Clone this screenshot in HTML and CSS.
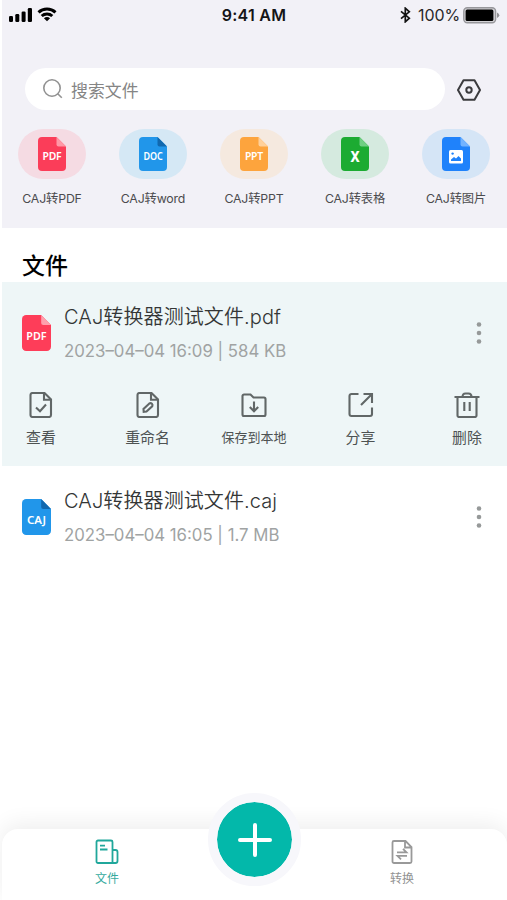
FILE: index.html
```html
<!DOCTYPE html>
<html lang="zh-CN">
<head>
<meta charset="utf-8">
<title>文件</title>
<link rel="stylesheet" href="styles.css">
</head>
<body>
<svg class="defs" width="0" height="0">
  <symbol id="doc" viewBox="0 0 28 34"><path d="M4 0H18.500L28 9.500V30a4 4 0 0 1-4 4H4a4 4 0 0 1-4-4V4a4 4 0 0 1 4-4Z" fill="currentColor"/></symbol>
</svg>
<div class="screen">
  <header class="top">
    <div class="status">
      <div class="signal">
        <svg width="23" height="16" viewBox="0 0 23 16"><rect x="0" y="9" width="4" height="6" rx="1.300"/><rect x="6.300" y="7" width="4" height="8" rx="1.300"/><rect x="12.600" y="4.500" width="4" height="10.500" rx="1.300"/><rect x="18.800" y="1" width="4.200" height="14" rx="1.300"/></svg>
        <svg width="20" height="15" viewBox="0 0 20 15"><path d="M1.500 5.400a12.500 12.500 0 0 1 17 0M4.700 9a7.800 7.800 0 0 1 10.600 0" fill="none" stroke="#000" stroke-width="3"/><path d="M10 14.300 6.900 11.300a4.600 4.600 0 0 1 6.200 0Z"/></svg>
      </div>
      <div class="clock">9:41 AM</div>
      <div class="power">
        <svg width="11" height="16" viewBox="0 0 11 16"><path d="M1 4.400 9.300 11.200 5.300 14.800V1.200l4 3.600L1 11.600" fill="none" stroke="#111" stroke-width="1.700"/></svg>
        <span>100%</span>
        <svg class="battery" width="37" height="17" viewBox="0 0 37 17"><rect x=".8" y=".8" width="31.800" height="15" rx="3.500" fill="#d2d1d5" stroke="#97979b" stroke-width="1.400"/><rect x="2.600" y="2.600" width="27.800" height="11.400" rx="1.500"/><path d="M34 5.500q2.300 1 2.300 2.800T34 11Z" fill="#919195"/></svg>
      </div>
    </div>
    <div class="searchrow">
      <div class="search">
        <svg width="20" height="20" viewBox="0 0 20 20" fill="none" stroke="#929292" stroke-width="1.600"><circle cx="9" cy="9" r="8.200"/><path d="m14.700 14.700 4.100 4"/></svg>
        <span>搜索文件</span>
      </div>
      <svg class="gear" width="24" height="22" viewBox="0 0 24 22" fill="none" stroke="#3b3b3e" stroke-width="2" stroke-linejoin="round"><path d="M6.500 1.300h11L23 11l-5.500 9.700h-11L1 11Z"/><circle cx="12" cy="11" r="2.700"/></svg>
    </div>
    <nav class="tools">
      <div class="tool"><div class="pill pink"><svg width="28" height="34" viewBox="0 0 28 34"><use href="#doc"/><path d="M18.500 0 28 9.500h-7.500a2 2 0 0 1-2-2Z" fill="#ff98a6"/><text x="14" y="23.300">PDF</text></svg></div><span>CAJ转PDF</span></div>
      <div class="tool"><div class="pill sky"><svg width="28" height="34" viewBox="0 0 28 34"><use href="#doc"/><path d="M18.500 0 28 9.500h-7.500a2 2 0 0 1-2-2Z" fill="#1168ae"/><text x="14" y="23.300" textLength="19" lengthAdjust="spacingAndGlyphs">DOC</text></svg></div><span>CAJ转word</span></div>
      <div class="tool"><div class="pill orange"><svg width="28" height="34" viewBox="0 0 28 34"><use href="#doc"/><path d="M18.500 0 28 9.500h-7.500a2 2 0 0 1-2-2Z" fill="#ffd09a"/><text x="14" y="23.300">PPT</text></svg></div><span>CAJ转PPT</span></div>
      <div class="tool"><div class="pill green"><svg width="28" height="34" viewBox="0 0 28 34"><use href="#doc"/><path d="M18.500 0 28 9.500h-7.500a2 2 0 0 1-2-2Z" fill="#70cf83"/><text class="big" x="14" y="24.800" textLength="9" lengthAdjust="spacingAndGlyphs">X</text></svg></div><span>CAJ转表格</span></div>
      <div class="tool"><div class="pill blue"><svg width="28" height="34" viewBox="0 0 28 34"><use href="#doc"/><path d="M18.500 0 28 9.500h-7.500a2 2 0 0 1-2-2Z" fill="#71b2ff"/><rect x="7" y="13" width="14" height="13.500" rx="1.500" fill="#fff"/><circle cx="10.600" cy="16.600" r="1.200" fill="currentColor"/><path d="M9 24v-1.500l3-2.500 2 1.500 2.500-2.500L19 21.500V24Z" fill="currentColor"/></svg></div><span>CAJ转图片</span></div>
    </nav>
  </header>
  <main>
    <h1>文件</h1>
    <section class="file active">
      <div class="row">
        <svg class="red" width="29" height="36" viewBox="0 0 28 34" preserveAspectRatio="none"><use href="#doc"/><path d="M18.500 0 28 9.500h-7.500a2 2 0 0 1-2-2Z" fill="#ffa0ad"/><text x="14" y="23.300">PDF</text></svg>
        <div class="info"><div class="name">CAJ转换器测试文件.pdf</div><div class="meta">2023–04–04 16:09 | 584 KB</div></div>
        <svg class="more" width="6" height="22" viewBox="0 0 6 22"><circle cx="3" cy="2.500" r="2.300"/><circle cx="3" cy="11" r="2.300"/><circle cx="3" cy="19.500" r="2.300"/></svg>
      </div>
      <div class="actions">
        <div class="action"><svg viewBox="0 0 26 26"><path d="M4.500 1h12L23 7.500V23a2 2 0 0 1-2 2H4.500a2 2 0 0 1-2-2V3a2 2 0 0 1 2-2Z"/><path d="M16 1.500v6.300h6.500"/><path d="m8 15.500 4 3.700 6-6.700"/></svg><span>查看</span></div>
        <div class="action"><svg viewBox="0 0 26 26"><path d="M4.500 1h12L23 7.500V23a2 2 0 0 1-2 2H4.500a2 2 0 0 1-2-2V3a2 2 0 0 1 2-2Z"/><path d="M16 1.500v6.300h6.500"/><path d="M8.700 19.800 8.500 17l5.800-5.500q1.500-.8 2.600.3t.3 2.600l-5.700 5.200Z"/></svg><span>重命名</span></div>
        <div class="action small"><svg viewBox="0 0 26 26"><path d="M3 2.500h6.500l3 3H23a1.500 1.500 0 0 1 1.500 1.500v15.500A1.500 1.500 0 0 1 23 24H3a1.500 1.500 0 0 1-1.500-1.500V4A1.500 1.500 0 0 1 3 2.500Z"/><path d="M13 9.500V19M8.800 15l4.200 4.200 4.200-4.200"/></svg><span>保存到本地</span></div>
        <div class="action"><svg viewBox="0 0 26 26"><path d="M10.500 2H3.500a2 2 0 0 0-2 2v18a2 2 0 0 0 2 2H22a2 2 0 0 0 2-2v-6.500M15.500 2H24v9M24 2 13 13"/></svg><span>分享</span></div>
        <div class="action"><svg viewBox="0 0 26 26"><path d="M.5 5h25M8.500 5q0-3.500 3-3.500h3q3 0 3 3.500M3.500 5v18.500A1.500 1.500 0 0 0 5 25h16a1.500 1.500 0 0 0 1.500-1.500V5M10.300 10v9M15.700 10v9"/></svg><span>删除</span></div>
      </div>
    </section>
    <section class="file">
      <div class="row">
        <svg class="azure" width="29" height="36" viewBox="0 0 28 34" preserveAspectRatio="none"><use href="#doc"/><path d="M18.500 0 28 9.500h-7.500a2 2 0 0 1-2-2Z" fill="#1168ae"/><text x="14" y="23.300" textLength="18.500" lengthAdjust="spacingAndGlyphs">CAJ</text></svg>
        <div class="info"><div class="name">CAJ转换器测试文件.caj</div><div class="meta">2023–04–04 16:05 | 1.7 MB</div></div>
        <svg class="more" width="6" height="22" viewBox="0 0 6 22"><circle cx="3" cy="2.500" r="2.300"/><circle cx="3" cy="11" r="2.300"/><circle cx="3" cy="19.500" r="2.300"/></svg>
      </div>
    </section>
  </main>
  <footer class="tabs">
    <div class="tab on"><svg width="24" height="26" viewBox="0 0 24 26"><path d="M3 1.500h13A1.500 1.500 0 0 1 17.500 3v21H3a1.500 1.500 0 0 1-1.500-1.500V3A1.500 1.500 0 0 1 3 1.500ZM17.500 11h3a2 2 0 0 1 2 2v9a2 2 0 0 1-2 2h-3M5 6.700h5M5 10.500h7.500"/></svg><span>文件</span></div>
    <div class="tab"><svg width="24" height="26" viewBox="0 0 24 26"><path d="M4 2h11.500l6 6v14.500A1.500 1.500 0 0 1 20 24H4a1.500 1.500 0 0 1-1.500-1.500v-19A1.500 1.500 0 0 1 4 2ZM15 2.500v6h6M7 13.300h9.500L13 9.800M17 16.800H7.500l3.500 3.500"/></svg><span>转换</span></div>
    <div class="add"><svg width="34" height="34" viewBox="0 0 34 34"><path d="M17 2v30M2 17h30" stroke="#fff" stroke-width="4" stroke-linecap="round"/></svg></div>
  </footer>
</div>
</body>
</html>
```

FILE: styles.css
```css
* { box-sizing: border-box; }
body { margin: 0; background: #fff; font-family: Inter, "Noto Sans CJK SC", sans-serif; }
svg { display: block; flex: none; }
.defs { position: absolute; }
.screen { width: 507px; height: 900px; padding-left: 2px; display: flex; flex-direction: column; overflow: hidden; }
.top { height: 228px; background: #f2f1f7; flex: none; }
.status { height: 68px; padding: 7px 7px 0 7px; display: grid; grid-template-columns: 1fr auto 1fr; align-items: start; }
.signal { display: flex; gap: 5px; }
.clock { font-size: 16px; line-height: 17px; font-weight: 600; color: #151517; letter-spacing: .25px; margin-right: 1px; }
.power { display: flex; justify-content: flex-end; font-size: 16px; line-height: 17px; color: #28282a; }
.power span { margin: 0 3px 0 7px; letter-spacing: -.1px; }
.searchrow { display: flex; align-items: center; gap: 12px; padding-left: 23px; }
.gear { margin-top: 2px; }
.search { width: 420px; height: 42px; border-radius: 21px; background: #fff; display: flex; align-items: center; gap: 8px; padding: 0 18px; font-size: 16.9px; color: #858585; }
.tools { display: grid; grid-template-columns: repeat(5, 1fr); margin: 19px .5px 0 -.5px; }
.tool { display: flex; flex-direction: column; align-items: center; font-size: 12.3px; line-height: 18px; letter-spacing: -.15px; color: #4b4b4e; gap: 11px; white-space: nowrap; }
.pill { width: 68px; height: 50px; border-radius: 25px; display: flex; align-items: center; justify-content: center; }
svg text { fill: #fff; font: 600 10.4px "Noto Sans", sans-serif; text-anchor: middle; }
svg .big { font-size: 15px; font-weight: 800; }
.pink { background: #f5dbe3; color: #fb3d59; }
.sky { background: #d5e8f5; color: #2196ea; }
.orange { background: #f5e9df; color: #fda43d; }
.green { background: #d5eadf; color: #1cab32; }
.blue { background: #d5e5f6; color: #1f82fb; }
.red { color: #fe3d59; }
.azure { color: #2196ea; }
h1 { margin: 0; height: 54px; padding: 21px 0 0 20px; font-size: 23px; line-height: 34px; font-weight: 500; color: #000; }
.file { height: 184px; }
.active { background: #eef6f7; }
.row { height: 102px; padding: 0 25px 0 20px; display: flex; align-items: center; }
.info { flex: 1; margin-left: 13px; padding-top: 2px; white-space: nowrap; }
.name { font-size: 20px; line-height: 34px; font-weight: 350; color: #343636; letter-spacing: .1px; }
.meta { font-size: 16.8px; line-height: 35px; color: #a0a3a3; font-weight: 380; letter-spacing: 0; }
.more { fill: #969999; }
.actions { display: flex; justify-content: space-between; padding: 8px 7px 0 6px; }
.action { width: 66px; display: flex; flex-direction: column; align-items: center; gap: 9px; font-size: 14.9px; line-height: 22px; color: #4d5252; white-space: nowrap; }
.action svg { width: 26px; height: 26px; fill: none; stroke: #616767; stroke-width: 2.1; }
.action.small { font-size: 13px; gap: 8px; }
.tabs { position: relative; margin-top: auto; height: 71px; flex: none; border-radius: 16px 16px 0 0; background: #fff; box-shadow: 0 -5px 22px #00000012; display: flex; justify-content: space-between; padding: 10px 82px 0; }
.tab { width: 46px; display: flex; flex-direction: column; align-items: center; gap: 5px; font-size: 12px; line-height: 18px; color: #929292; }
.tab svg { fill: none; stroke: #999; stroke-width: 1.8; }
.on { color: #35aa9e; }
.tab.on svg { stroke: #20a79b; }
.add { position: absolute; left: 206px; top: -36px; width: 93px; height: 93px; border: 9px solid #f7f7fb; border-radius: 50%; background: #03b8aa; background-clip: padding-box; display: flex; align-items: center; justify-content: center; }
```
